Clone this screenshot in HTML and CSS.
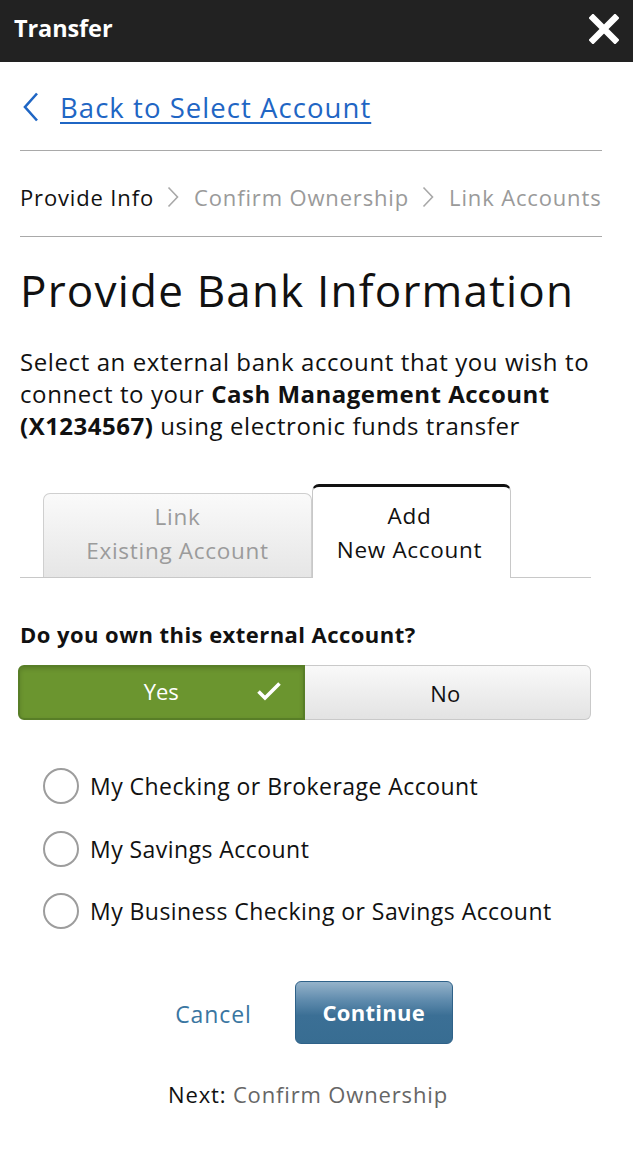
FILE: index.html
```html
<!DOCTYPE html>
<html lang="en">
<head>
<meta charset="utf-8">
<title>Transfer</title>
<link rel="stylesheet" href="styles.css">
</head>
<body>
<header class="topbar">
  <h2 class="topbar-title">Transfer</h2>
  <button class="close" aria-label="Close">
    <svg width="30" height="30" viewBox="0 0 30 30"><path d="M4 4 L26 26 M26 4 L4 26" stroke="#fff" stroke-width="6.5" stroke-linecap="square"/></svg>
  </button>
</header>
<main class="content">
  <div class="back">
    <svg class="chev" width="18" height="30" viewBox="0 0 18 30"><path d="M15 1.5 L3 15 L15 28.5" fill="none" stroke="#1f66c4" stroke-width="2.6"/></svg>
    <a class="back-link" href="#">Back to Select Account</a>
  </div>
  <nav class="steps">
    <span class="step current">Provide Info</span>
    <svg class="sep" width="12" height="22" viewBox="0 0 12 22"><path d="M1.5 1.5 L10.5 11 L1.5 20.5" fill="none" stroke="#a8a8a8" stroke-width="1.6"/></svg>
    <span class="step">Confirm Ownership</span>
    <svg class="sep" width="12" height="22" viewBox="0 0 12 22"><path d="M1.5 1.5 L10.5 11 L1.5 20.5" fill="none" stroke="#a8a8a8" stroke-width="1.6"/></svg>
    <span class="step">Link Accounts</span>
  </nav>
  <h1 class="title">Provide Bank Information</h1>
  <p class="intro">Select an external bank account that you wish to<br>connect to your <b>Cash Management Account<br>(X1234567)</b> using electronic funds transfer</p>
  <div class="tabs">
    <div class="tab">Link<br>Existing Account</div>
    <div class="tab active">Add<br>New Account</div>
  </div>
  <h3 class="question">Do you own this external Account?</h3>
  <div class="segmented">
    <div class="seg yes">Yes
      <svg class="check" width="26" height="20" viewBox="0 0 26 20"><path d="M2.5 10.5 L9 17 L23.5 2.5" fill="none" stroke="#fff" stroke-width="3.6"/></svg>
    </div>
    <div class="seg no">No</div>
  </div>
  <ul class="radios">
    <li class="radio"><span class="circle"></span>My Checking or Brokerage Account</li>
    <li class="radio"><span class="circle"></span>My Savings Account</li>
    <li class="radio"><span class="circle"></span>My Business Checking or Savings Account</li>
  </ul>
  <div class="actions">
    <a class="cancel" href="#">Cancel</a>
    <button class="continue">Continue</button>
  </div>
  <p class="next">Next: <span class="next-step">Confirm Ownership</span></p>
</main>
</body>
</html>
```
FILE: styles.css
```css
* { box-sizing: border-box; }
body {
  margin: 0;
  font-family: "Open Sans", "Noto Sans", sans-serif;
  color: #111;
  background: #fff;
}
.topbar {
  height: 62px;
  background: #222;
  display: flex;
  align-items: center;
  justify-content: space-between;
  padding: 0 14px 0 14px;
}
.topbar-title {
  margin: -6px 0 0;
  color: #fff;
  font-size: 23.5px;
  font-weight: 700;
  letter-spacing: -0.1px;
}
.close {
  background: none;
  border: 0;
  padding: 0;
  width: 30px;
  height: 30px;
  margin-top: -4px;
}
.content {
  padding: 0 31px 0 20px;
}
.back {
  height: 89px;
  display: flex;
  align-items: center;
  border-bottom: 1px solid #a9a9a9;
  padding-left: 2px;
  padding-top: 3px;
}
.chev { margin-right: 20px; margin-top: -2px; }
.back-link {
  color: #1f66c4;
  font-size: 27.5px;
  letter-spacing: 1.05px;
  text-decoration: underline;
  text-decoration-thickness: 2px;
  text-underline-offset: 4px;
}
.steps {
  height: 86px;
  display: flex;
  align-items: center;
  border-bottom: 1px solid #a9a9a9;
  font-size: 22px;
  letter-spacing: 0.85px;
  color: #9a9a9a;
  white-space: nowrap;
  padding-top: 6px;
}
.step.current { color: #111; }
.sep {
  margin: 0 15px 0 13px;
  flex: none;
}
.title {
  margin: 27px 0 0;
  font-size: 44px;
  line-height: 52px;
  font-weight: 400;
  letter-spacing: 1.2px;
}
.intro {
  margin: 30px 0 0;
  font-size: 24px;
  line-height: 32px;
  letter-spacing: 0.6px;
  white-space: nowrap;
}
.intro b { font-weight: 700; letter-spacing: 0.5px; }
.tabs {
  margin-top: 42px;
  width: 571px;
  display: flex;
  align-items: flex-end;
  padding-left: 23px;
  border-bottom: 1px solid #c8c8c8;
}
.tab {
  width: 269px;
  height: 84px;
  border: 1px solid #cfcfcf;
  border-bottom: 0;
  border-radius: 7px 7px 0 0;
  background: linear-gradient(#fafafa, #e6e6e6);
  color: #9b9b9b;
  text-align: center;
  font-size: 22.5px;
  letter-spacing: 0.7px;
  line-height: 34px;
  padding-top: 6px;
}
.tab.active {
  width: 199px;
  background: #fff;
  color: #111;
  border-color: #c8c8c8;
  border-top: 3px solid #111;
  margin-bottom: -1px;
  height: 94px;
  padding-top: 12px;
  padding-right: 4px;
}
.question {
  margin: 42px 0 0;
  font-size: 22px;
  line-height: 28px;
  font-weight: 700;
  letter-spacing: 0.45px;
}
.segmented {
  margin: 17px 0 0 -2px;
  width: 573px;
  height: 55px;
  display: flex;
}
.seg {
  flex: 0 0 50%;
  display: flex;
  align-items: center;
  justify-content: center;
  font-size: 22px;
  position: relative;
}
.seg.yes {
  background: #6b952f;
  color: #fff;
  border: 2px solid #587e27;
  border-radius: 6px 0 0 6px;
  box-shadow: inset 0 2px 4px rgba(0,0,0,0.15);
  padding-bottom: 3px;
}
.check {
  position: absolute;
  right: 21px;
  top: 14px;
}
.seg.no {
  background: linear-gradient(#f9f9f9, #e3e3e3);
  border: 1px solid #c9c9c9;
  border-left: 0;
  border-radius: 0 6px 6px 0;
  color: #111;
  padding-right: 4px;
}
.radios {
  list-style: none;
  margin: 35px 0 0;
  padding: 0 0 0 23px;
}
.radio {
  height: 62.5px;
  display: flex;
  align-items: center;
  font-size: 23px;
  letter-spacing: 0.45px;
}
.circle {
  width: 36px;
  height: 36px;
  border: 2px solid #9d9d9d;
  border-radius: 50%;
  margin-right: 11px;
  flex: none;
}
.actions {
  margin-top: 38px;
  display: flex;
  align-items: center;
  justify-content: center;
  gap: 43px;
  padding-left: 6px;
}
.cancel {
  color: #3a76a1;
  font-size: 23px;
  letter-spacing: 0.9px;
  text-decoration: none;
  margin-top: 4px;
}
.continue {
  width: 158px;
  height: 63px;
  border: 1px solid #2f6289;
  border-radius: 6px;
  background: linear-gradient(#95b3ca 0%, #5f8bad 30%, #3b6f95 55%, #386d92 100%);
  color: #fff;
  font-family: inherit;
  font-size: 22px;
  font-weight: 700;
  letter-spacing: 0.3px;
  padding-bottom: 2px;
}
.next {
  margin: 36px 0 0;
  text-align: center;
  font-size: 22px;
  letter-spacing: 0.85px;
  line-height: 28px;
  padding-right: 6px;
}
.next-step { color: #666; }
```
